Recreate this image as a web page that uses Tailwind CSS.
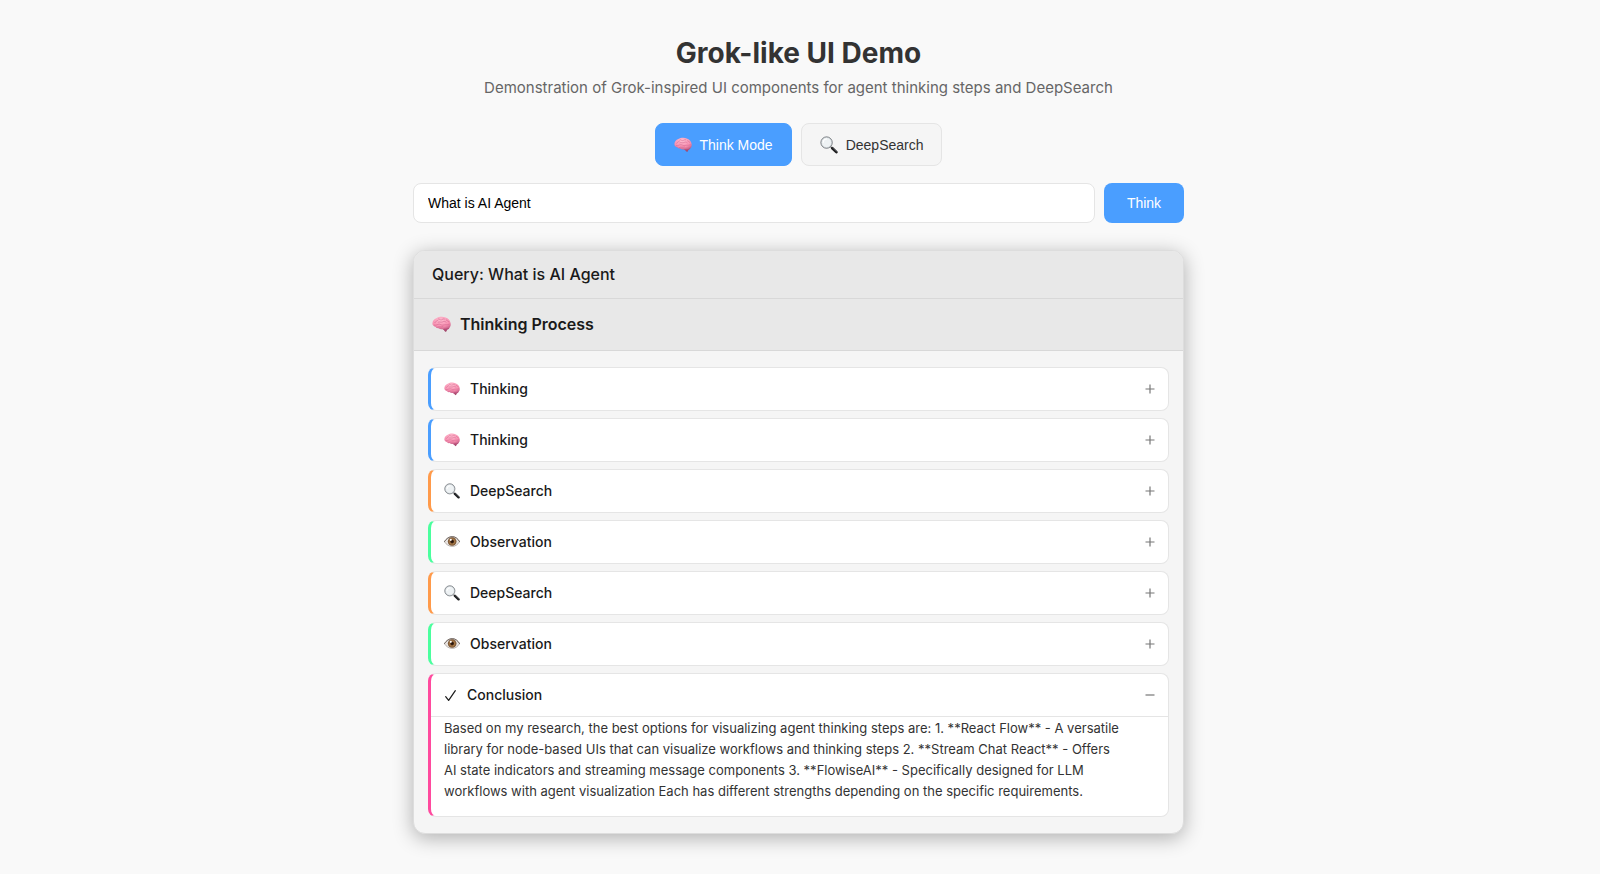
<!DOCTYPE html>
<html lang="en">
<head>
<meta charset="utf-8">
<meta name="viewport" content="width=device-width, initial-scale=1">
<title>Grok-like UI Demo</title>
<script src="https://cdn.jsdelivr.net/npm/@tailwindcss/browser@4"></script>
</head>
<body class="min-h-screen bg-[#f9f9f9] pr-[3px] font-['Inter',sans-serif] text-[#1a1a1a]">
<svg class="absolute size-0" aria-hidden="true">
  <defs>
    <radialGradient id="pink" cx="45%" cy="25%" r="80%">
      <stop offset="0" stop-color="#ffbdd0"/><stop offset=".65" stop-color="#f78fb0"/><stop offset="1" stop-color="#c25c84"/>
    </radialGradient>
    <radialGradient id="iris">
      <stop offset="0" stop-color="#1b0f08"/><stop offset=".3" stop-color="#3a2010"/><stop offset=".55" stop-color="#a87a48"/><stop offset="1" stop-color="#6e4c2e"/>
    </radialGradient>
    <symbol id="brain" viewBox="0 0 20 20">
      <path d="M12 14.500c.4 1.400 1.300 2.900 2.700 3.300 .8-.8 1.300-2 1.400-3.200z" fill="#a34a6d"/>
      <path d="M10.500 14c1 1.900 3.300 2.400 5.500 1.600 1.700-.6 2.500-1.800 2.400-3z" fill="#b64d78"/>
      <path d="M.5 9.600C.2 6.700 2 4.200 4.700 3.300 7.300 1.700 11.500 1.400 14.200 2.700c2.800.7 4.900 3 5.300 5.700.6 2.300-.2 4.600-2.100 5.400-1.800 1-4 .6-5.400.9-2 .8-3.900.4-5.100-.8-1.200.2-2.400-.2-3-1.200C2 12.200.7 11.100.5 9.600z" fill="url(#pink)"/>
      <path d="M3 8c1-1.700 2.400-1.500 3.300-2.600M7 4.100c1.200.3 1.500 1.300 3 1 1-.2 1.600-1.400 3-.9M2.600 10.700c2.200.6 3.200-1.300 5.200-1 2 .4 2.700 1.400 4.700.8 1.800-.5 2.900.2 5.500-.8M6.500 7.500c1.600-.7 2.900.5 4.500-.2 1.500-.7 2.500-.9 3.800.2M15 5.200c1.200.5 1.700 1.500 2.700 2.100M6 12.700c1.700-.8 3.700.2 5.500-.5" fill="none" stroke="#d0658e" stroke-width=".6" stroke-linecap="round"/>
    </symbol>
    <symbol id="glass" viewBox="0 0 20 20">
      <path d="M11.800 12l2 1.900" stroke="#777" stroke-width="1.500"/>
      <path d="M13.700 13.600l4.500 4.300" stroke="#1d1d1f" stroke-width="3" stroke-linecap="round"/>
      <path d="M14.100 13.200l4.200 3.900" stroke="#70757b" stroke-width=".6" stroke-linecap="round"/>
      <circle cx="7.300" cy="7.300" r="6.300" fill="#eef2f4" stroke="#555a60" stroke-width=".9"/>
      <circle cx="7.300" cy="7.300" r="5.600" fill="none" stroke="#b9c0c5" stroke-width=".5"/>
      <path d="M3.700 7a3.700 3.700 0 0 1 3.600-3.600" fill="none" stroke="#fff" stroke-width="1.200" stroke-linecap="round"/>
    </symbol>
    <symbol id="eye" viewBox="0 0 20 20">
      <path d="M.5 9.700C3.200 5.500 6.500 3.500 10.300 3.500c3.700 0 6.800 2.100 9.200 6.100-2.400 3.900-5.400 5.900-9.200 5.900-4 0-7.300-2-9.800-5.800z" fill="#e9e5e2" stroke="#8d8580" stroke-width=".7"/>
      <circle cx="10.200" cy="9.400" r="5.400" fill="url(#iris)"/>
      <circle cx="8.500" cy="7.300" r="1.300" fill="#fff"/>
      <path d="M.5 9.500C3.200 5.200 6.500 3.200 10.300 3.200c3.700 0 6.800 2.100 9.200 6.300" fill="none" stroke="#6b605a" stroke-width="1.100" stroke-linecap="round"/>
    </symbol>
    <symbol id="check" viewBox="0 0 14 14">
      <path d="M1.800 8.200L5 12.300 12.200 1.800" fill="none" stroke="#1a1a1a" stroke-width="1.300" stroke-linecap="round" stroke-linejoin="round"/>
    </symbol>
    <symbol id="plus" viewBox="0 0 10 10"><path d="M5 .5v9M.5 5h9" stroke="#777" stroke-width="1.200"/></symbol>
    <symbol id="minus" viewBox="0 0 10 10"><path d="M.5 5h9" stroke="#777" stroke-width="1.200"/></symbol>
  </defs>
</svg>

<main class="mx-auto max-w-[771px] pt-8 pb-10">
  <header class="text-center">
    <h1 class="text-[28px] leading-[42px] font-bold text-[#333]">Grok-like UI Demo</h1>
    <p class="mt-1 text-[15px] leading-5 text-[#666]">Demonstration of Grok-inspired UI components for agent thinking steps and DeepSearch</p>
  </header>

  <div class="mt-[25px] flex justify-center gap-[9px] font-['Liberation_Sans',sans-serif] text-sm">
    <button type="button" class="flex h-[43px] items-center gap-2 rounded-lg border border-[#4a9eff] bg-[#4a9eff] px-[18px] text-white"><svg class="size-[18px]"><use href="#brain"/></svg>Think Mode</button>
    <button type="button" class="flex h-[43px] items-center gap-2 rounded-lg border border-[#e5e5e5] bg-[#f5f5f5] px-[18px] text-[#333]"><svg class="size-[18px]"><use href="#glass"/></svg>DeepSearch</button>
  </div>

  <form class="mt-[17px] flex gap-[9px] font-['Liberation_Sans',sans-serif] text-sm">
    <input type="text" aria-label="Query" value="What is AI Agent" class="h-10 min-w-0 flex-1 rounded-lg border border-[#e5e5e5] bg-white px-[14px] text-black">
    <button type="button" class="h-10 w-20 rounded-lg bg-[#4a9eff] text-white">Think</button>
  </form>

  <section class="mt-[27px] overflow-hidden rounded-xl border border-[#ddd] bg-[#f5f5f5] shadow-[0_4px_20px_rgba(0,0,0,0.3)]">
    <h2 class="border-b border-[#d8d8d8] bg-[#e8e8e8] px-[18px] py-3 text-base leading-[23px] font-medium">Query: What is AI Agent</h2>
    <h3 class="flex items-center gap-[9px] border-b border-[#d8d8d8] bg-[#e8e8e8] px-[18px] py-[14px] text-base leading-[23px] font-semibold"><svg class="size-[19px]"><use href="#brain"/></svg>Thinking Process</h3>
    <div class="flex flex-col gap-[7px] px-[14px] py-4">
      <article class="rounded-lg border border-l-[3px] border-[#e5e5e5] border-l-[#4a9eff] bg-white">
        <button type="button" aria-expanded="false" class="flex h-[42px] w-full items-center px-[13px] text-sm font-medium"><svg class="mr-[10px] size-4"><use href="#brain"/></svg>Thinking<svg class="ml-auto size-[10px]"><use href="#plus"/></svg></button>
      </article>
      <article class="rounded-lg border border-l-[3px] border-[#e5e5e5] border-l-[#4a9eff] bg-white">
        <button type="button" aria-expanded="false" class="flex h-[42px] w-full items-center px-[13px] text-sm font-medium"><svg class="mr-[10px] size-4"><use href="#brain"/></svg>Thinking<svg class="ml-auto size-[10px]"><use href="#plus"/></svg></button>
      </article>
      <article class="rounded-lg border border-l-[3px] border-[#e5e5e5] border-l-[#ff9a4a] bg-white">
        <button type="button" aria-expanded="false" class="flex h-[42px] w-full items-center px-[13px] text-sm font-medium"><svg class="mr-[10px] size-4"><use href="#glass"/></svg>DeepSearch<svg class="ml-auto size-[10px]"><use href="#plus"/></svg></button>
      </article>
      <article class="rounded-lg border border-l-[3px] border-[#e5e5e5] border-l-[#4aff9e] bg-white">
        <button type="button" aria-expanded="false" class="flex h-[42px] w-full items-center px-[13px] text-sm font-medium"><svg class="mr-[10px] size-4"><use href="#eye"/></svg>Observation<svg class="ml-auto size-[10px]"><use href="#plus"/></svg></button>
      </article>
      <article class="rounded-lg border border-l-[3px] border-[#e5e5e5] border-l-[#ff9a4a] bg-white">
        <button type="button" aria-expanded="false" class="flex h-[42px] w-full items-center px-[13px] text-sm font-medium"><svg class="mr-[10px] size-4"><use href="#glass"/></svg>DeepSearch<svg class="ml-auto size-[10px]"><use href="#plus"/></svg></button>
      </article>
      <article class="rounded-lg border border-l-[3px] border-[#e5e5e5] border-l-[#4aff9e] bg-white">
        <button type="button" aria-expanded="false" class="flex h-[42px] w-full items-center px-[13px] text-sm font-medium"><svg class="mr-[10px] size-4"><use href="#eye"/></svg>Observation<svg class="ml-auto size-[10px]"><use href="#plus"/></svg></button>
      </article>
      <article class="rounded-lg border border-l-[3px] border-[#e5e5e5] border-l-[#ff4a9e] bg-white">
        <button type="button" aria-expanded="true" class="flex h-[43px] w-full items-center border-b border-[#e5e5e5] px-[13px] text-sm font-medium"><svg class="mr-[10px] size-[13px]"><use href="#check"/></svg>Conclusion<svg class="ml-auto size-[10px]"><use href="#minus"/></svg></button>
        <p class="px-[13px] pt-px pb-[14px] text-[13px] leading-[21px] text-[#333]">Based on my research, the best options for visualizing agent thinking steps are: 1. **React Flow** - A versatile<br>library for node-based UIs that can visualize workflows and thinking steps 2. **Stream Chat React** - Offers<br>AI state indicators and streaming message components 3. **FlowiseAI** - Specifically designed for LLM<br>workflows with agent visualization Each has different strengths depending on the specific requirements.</p>
      </article>
    </div>
  </section>
</main>
</body>
</html>
